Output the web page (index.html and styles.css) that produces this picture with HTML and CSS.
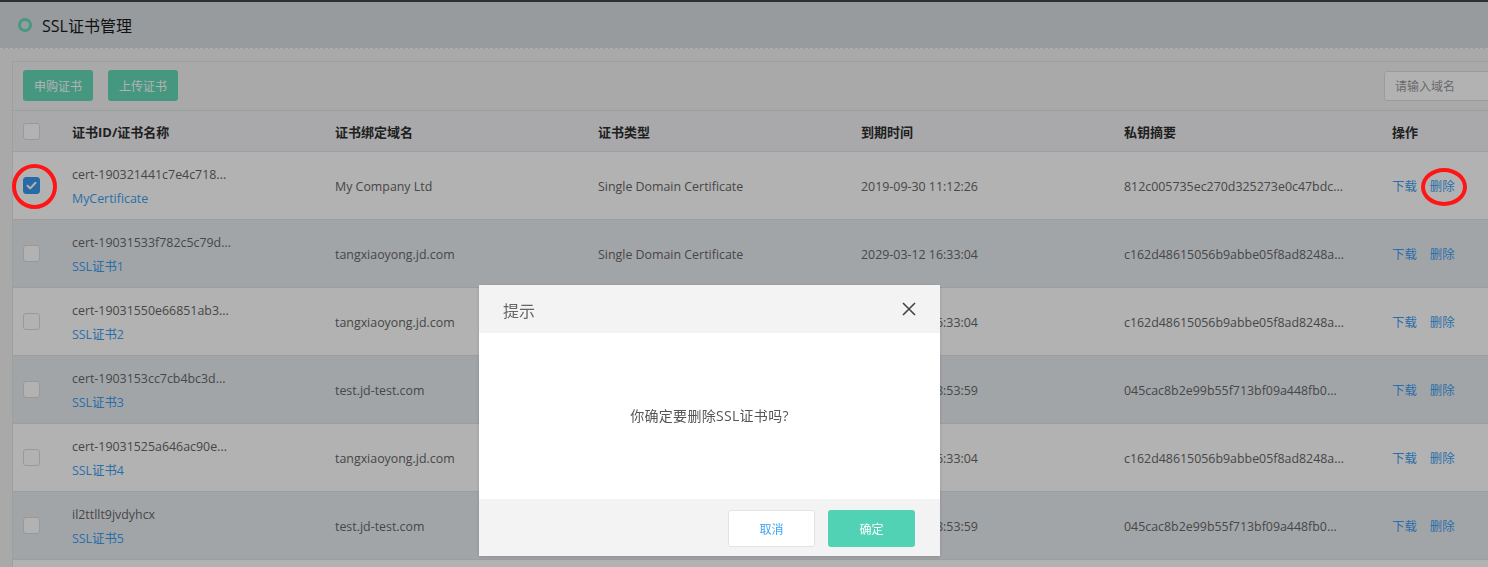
FILE: index.html
```html
<!DOCTYPE html>
<html lang="zh-CN">
<head>
<meta charset="utf-8">
<title>SSL证书管理</title>
<link rel="stylesheet" href="styles.css">
</head>
<body>
<div class="topbar"></div>
<header class="page-head">
  <span class="ring"></span>
  <h1>SSL证书管理</h1>
</header>
<main class="content">
  <section class="panel">
    <div class="toolbar">
      <button class="btn-green">申购证书</button>
      <button class="btn-green">上传证书</button>
      <input class="search" type="text" placeholder="请输入域名">
    </div>
    <table class="grid">
      <colgroup>
        <col class="c0"><col class="c1"><col class="c1"><col class="c1"><col class="c1"><col class="c5"><col>
      </colgroup>
      <thead>
        <tr>
          <th class="chk"><span class="box"></span></th>
          <th>证书ID/证书名称</th>
          <th>证书绑定域名</th>
          <th>证书类型</th>
          <th>到期时间</th>
          <th>私钥摘要</th>
          <th>操作</th>
        </tr>
      </thead>
      <tbody>
        <tr>
          <td class="chk"><span class="box checked"><svg viewBox="0 0 17 17" width="17" height="17"><path d="M4.5 8.8 L7.3 11.4 L12.5 5.8" fill="none" stroke="#fff" stroke-width="2" stroke-linecap="round" stroke-linejoin="round"/></svg></span></td>
          <td><div>cert-190321441c7e4c718...</div><a class="link">MyCertificate</a></td>
          <td>My Company Ltd</td>
          <td>Single Domain Certificate</td>
          <td>2019-09-30 11:12:26</td>
          <td>812c005735ec270d325273e0c47bdc...</td>
          <td><a class="link">下载</a><a class="link op">删除</a></td>
        </tr>
        <tr>
          <td class="chk"><span class="box"></span></td>
          <td><div>cert-19031533f782c5c79d...</div><a class="link">SSL证书1</a></td>
          <td>tangxiaoyong.jd.com</td>
          <td>Single Domain Certificate</td>
          <td>2029-03-12 16:33:04</td>
          <td>c162d48615056b9abbe05f8ad8248a...</td>
          <td><a class="link">下载</a><a class="link op">删除</a></td>
        </tr>
        <tr>
          <td class="chk"><span class="box"></span></td>
          <td><div>cert-19031550e66851ab3...</div><a class="link">SSL证书2</a></td>
          <td>tangxiaoyong.jd.com</td>
          <td>Single Domain Certificate</td>
          <td>2029-03-12 16:33:04</td>
          <td>c162d48615056b9abbe05f8ad8248a...</td>
          <td><a class="link">下载</a><a class="link op">删除</a></td>
        </tr>
        <tr>
          <td class="chk"><span class="box"></span></td>
          <td><div>cert-1903153cc7cb4bc3d...</div><a class="link">SSL证书3</a></td>
          <td>test.jd-test.com</td>
          <td>Single Domain Certificate</td>
          <td>2029-03-12 18:53:59</td>
          <td>045cac8b2e99b55f713bf09a448fb0...</td>
          <td><a class="link">下载</a><a class="link op">删除</a></td>
        </tr>
        <tr>
          <td class="chk"><span class="box"></span></td>
          <td><div>cert-19031525a646ac90e...</div><a class="link">SSL证书4</a></td>
          <td>tangxiaoyong.jd.com</td>
          <td>Single Domain Certificate</td>
          <td>2029-03-12 16:33:04</td>
          <td>c162d48615056b9abbe05f8ad8248a...</td>
          <td><a class="link">下载</a><a class="link op">删除</a></td>
        </tr>
        <tr>
          <td class="chk"><span class="box"></span></td>
          <td><div>il2ttllt9jvdyhcx</div><a class="link">SSL证书5</a></td>
          <td>test.jd-test.com</td>
          <td>Single Domain Certificate</td>
          <td>2029-03-12 18:53:59</td>
          <td>045cac8b2e99b55f713bf09a448fb0...</td>
          <td><a class="link">下载</a><a class="link op">删除</a></td>
        </tr>
        <tr>
          <td class="chk"><span class="box"></span></td>
          <td><div>cert-1903152ab1c7e9f0a...</div><a class="link">SSL证书6</a></td>
          <td>tangxiaoyong.jd.com</td>
          <td>Single Domain Certificate</td>
          <td>2029-03-12 16:33:04</td>
          <td>c162d48615056b9abbe05f8ad8248a...</td>
          <td><a class="link">下载</a><a class="link op">删除</a></td>
        </tr>
      </tbody>
    </table>
  </section>
</main>

<div class="mask"></div>

<div class="dialog">
  <div class="dlg-head">
    <span class="dlg-title">提示</span>
    <svg class="dlg-close" viewBox="0 0 14 14" width="14" height="14"><path d="M1 1 L13 13 M13 1 L1 13" stroke="#444" stroke-width="1.6" fill="none"/></svg>
  </div>
  <div class="dlg-body">你确定要删除SSL证书吗?</div>
  <div class="dlg-foot">
    <button class="btn-cancel">取消</button>
    <button class="btn-ok">确定</button>
  </div>
</div>

<span class="mark mark-check"></span>
<span class="mark mark-del"></span>
</body>
</html>
```

FILE: styles.css
```css
* { box-sizing: border-box; }
html, body {
  margin: 0;
  padding: 0;
  width: 1488px;
  height: 567px;
  overflow: hidden;
  background: #f2f2f2;
  font-family: "Open Sans", "Noto Sans CJK SC", sans-serif;
  font-size: 12px;
  color: #666;
}
.topbar {
  height: 2px;
  background: #3e434a;
}
.page-head {
  height: 47px;
  background: #d8dee3;
  border-bottom: 1px dashed #fbfbfb;
  display: flex;
  align-items: center;
  padding-left: 18px;
}
.ring {
  width: 14px;
  height: 14px;
  border: 3px solid #62dcb5;
  border-radius: 50%;
  margin-right: 10px;
}
.page-head h1 {
  margin: 0;
  font-size: 16px;
  font-weight: normal;
  color: #1a1a1a;
}
.content {
  padding: 12px 0 0 12px;
}
.panel {
  width: 1540px;
  background: #f3f3f3;
  border: 1px solid #e3e4e6;
}
.toolbar {
  display: flex;
  align-items: flex-start;
  padding: 8px 10px 0 10px;
  height: 48px;
}
.btn-green {
  height: 31px;
  padding: 0 11px;
  border: none;
  border-radius: 3px;
  background: #64d8b6;
  color: #fff;
  font-family: inherit;
  font-size: 12px;
  margin-right: 15px;
}
.search {
  margin-left: auto;
  margin-top: 1px;
  width: 157px;
  height: 30px;
  border: 1px solid #dcdfe3;
  border-radius: 3px;
  background: #fff;
  padding: 0 10px;
  font-family: inherit;
  font-size: 12px;
}
.search::placeholder { color: #999; }
.grid {
  width: 100%;
  border-collapse: collapse;
  table-layout: fixed;
}
.c0 { width: 47px; }
.c1 { width: 263px; }
.c5 { width: 268px; }
.grid th {
  height: 41px;
  text-align: left;
  font-size: 13px;
  font-weight: bold;
  color: #2e2e2e;
  background: #f2f3f5;
  border-top: 1px solid #e0e2e5;
  border-bottom: 1px solid #e0e2e5;
  padding: 0 0 0 12px;
}
.grid td {
  height: 68px;
  padding: 2px 0 0 12px;
  border-bottom: 1px solid #e0e2e5;
  line-height: 24px;
  font-size: 12.4px;
  color: #666;
  white-space: nowrap;
  vertical-align: middle;
}
.grid th.chk { padding-left: 10px; }
.grid td.chk { padding: 0 0 0 10px; }
.grid tbody tr:nth-child(odd) td { background: #ffffff; }
.grid tbody tr:nth-child(even) td { background: #e9edf1; }
.box {
  display: block;
  width: 17px;
  height: 17px;
  border: 1px solid #dcdcdc;
  border-radius: 3px;
  background: #fff;
}
.box.checked {
  border-color: #3a98ea;
  background: #3a98ea;
}
.box svg { display: block; margin: -1px 0 0 -1px; }
.link {
  color: #3d9ef2;
  text-decoration: none;
}
.op { margin-left: 13px; }

.mask {
  position: fixed;
  inset: 0;
  background: rgba(0, 0, 0, 0.3);
}

.dialog {
  position: fixed;
  left: 479px;
  top: 285px;
  width: 461px;
  background: #fff;
  box-shadow: 0 1px 4px rgba(0, 0, 0, 0.15);
}
.dlg-head {
  height: 48px;
  background: #f3f3f3;
  display: flex;
  align-items: center;
  justify-content: space-between;
  padding: 0 24px;
}
.dlg-title {
  font-size: 16px;
  color: #666;
  padding-top: 2px;
}
.dlg-close { display: block; }
.dlg-body {
  height: 166px;
  display: flex;
  align-items: center;
  justify-content: center;
  font-size: 14px;
  letter-spacing: 0.3px;
  color: #555;
  padding-bottom: 2px;
}
.dlg-foot {
  height: 57px;
  background: #f3f3f3;
  display: flex;
  justify-content: flex-end;
  align-items: flex-start;
  padding: 11px 25px 0 0;
  gap: 13px;
}
.dlg-foot button {
  width: 87px;
  height: 37px;
  border-radius: 3px;
  font-family: inherit;
  font-size: 12px;
}
.btn-cancel {
  background: #fff;
  border: 1px solid #e3e3e3;
  color: #3ea3f2;
}
.btn-ok {
  background: #52d2b4;
  border: none;
  color: #fff;
}

.mark {
  position: fixed;
  border: 4px solid #ff1515;
  border-radius: 50%;
}
.mark-check {
  left: 12px;
  top: 164px;
  width: 45px;
  height: 45px;
}
.mark-del {
  left: 1421px;
  top: 168px;
  width: 46px;
  height: 38px;
}
```
